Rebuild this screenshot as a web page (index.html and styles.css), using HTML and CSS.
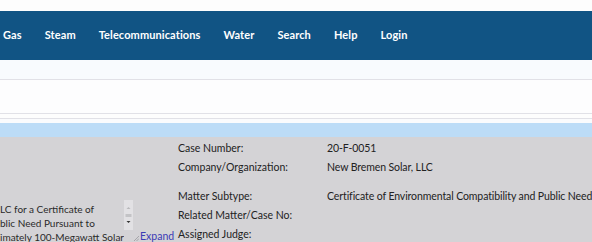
FILE: index.html
```html
<!DOCTYPE html>
<html lang="en">
<head>
    <meta charset="UTF-8">
    <meta name="viewport" content="width=device-width, initial-scale=1.0">
    <title>Case Details</title>
    <link rel="stylesheet" href="styles.css">
</head>
<body>
    <div class="top-strip"></div>

    <nav class="main-nav">
        <a href="#">Gas</a>
        <a href="#">Steam</a>
        <a href="#">Telecommunications</a>
        <a href="#">Water</a>
        <a href="#">Search</a>
        <a href="#">Help</a>
        <a href="#">Login</a>
    </nav>

    <div class="sub-bar"></div>
    <div class="search-bar"></div>
    <div class="spacer-line"></div>
    <div class="section-title"></div>

    <div class="details">
        <div class="description">
            <div class="textbox">
                <div class="textbox-text">LC for a Certificate of
blic Need Pursuant to
imately 100-Megawatt Solar</div>
                <div class="scrollbar">
                    <svg width="9" height="30" viewBox="0 0 9 30">
                        <rect x="0" y="0" width="9" height="30" fill="#e2e1e4"/>
                        <path d="M2.5 9 L4.5 7 L6.5 9 Z" fill="#b8b8bb"/>
                        <rect x="1.5" y="14" width="6" height="3" fill="#c3c3c6"/>
                        <path d="M2.5 21 L4.5 23 L6.5 21 Z" fill="#333"/>
                    </svg>
                </div>
            </div>
            <div class="expand-row">
                <svg class="grip" width="6" height="6" viewBox="0 0 6 6">
                    <path d="M1 6 L6 1 M3.5 6 L6 3.5" stroke="#9a9a9e" stroke-width="0.8"/>
                </svg>
                <a href="#" class="expand-link">Expand</a>
            </div>
        </div>

        <div class="info-grid">
            <div class="label">Case Number:</div>
            <div class="value">20-F-0051</div>
            <div class="label">Company/Organization:</div>
            <div class="value">New Bremen Solar, LLC</div>
            <div class="label gap-top">Matter Subtype:</div>
            <div class="value gap-top">Certificate of Environmental Compatibility and Public Need</div>
            <div class="label">Related Matter/Case No:</div>
            <div class="value"></div>
            <div class="label">Assigned Judge:</div>
            <div class="value"></div>
        </div>
    </div>
</body>
</html>
```

FILE: styles.css
```css
:root {
    --nav-color: #115484;
    --blue-strip: #bcdcf7;
    --panel-gray: #d4d3d6;
    --line-color: #e1e1e7;
    --text-color: #222;
}

* {
    margin: 0;
    padding: 0;
    box-sizing: border-box;
}

body {
    width: 592px;
    height: 242px;
    overflow: hidden;
    background: #fdfdfd;
    font-family: Lato, "Open Sans", sans-serif;
    color: var(--text-color);
}

.top-strip {
    height: 11px;
    background: #fdfdfd;
}

.main-nav {
    height: 49px;
    background: var(--nav-color);
    display: flex;
    align-items: center;
    gap: 23px;
    padding-left: 3px;
    padding-bottom: 2px;
}

.main-nav a {
    color: #fff;
    text-decoration: none;
    font-weight: bold;
    font-size: 11px;
    letter-spacing: 0.1px;
}

.sub-bar {
    height: 20px;
    background: #f8fbfe;
    border-bottom: 1px solid var(--line-color);
}

.search-bar {
    height: 34px;
    background: #fdfdfe;
    border-bottom: 1px solid var(--line-color);
}

.spacer-line {
    height: 5px;
    border-bottom: 1px solid var(--line-color);
}

.section-title {
    height: 18px;
    background: var(--blue-strip);
    border-top: 4px solid #fafbfd;
}

.details {
    display: flex;
    background: var(--panel-gray);
    height: 106px;
    overflow: hidden;
}

.description {
    flex-shrink: 0;
    width: 178px;
    display: flex;
    align-items: flex-end;
}

.textbox {
    display: flex;
    width: 133px;
    flex-shrink: 0;
    margin-bottom: -1px;
}

.textbox-text {
    flex: 1;
    white-space: pre;
    font-size: 10px;
    line-height: 14px;
    color: #2a2a2a;
    overflow: hidden;
}

.scrollbar {
    display: flex;
    align-items: flex-start;
    margin-top: -2px;
}

.expand-row {
    display: flex;
    align-items: flex-end;
    gap: 1px;
}

.grip {
    margin-bottom: 2px;
}

.expand-link {
    color: #3b3bb5;
    text-decoration: none;
    font-size: 10.5px;
    line-height: 14px;
}

.info-grid {
    display: grid;
    grid-template-columns: 149px 1fr;
    align-content: start;
    padding-top: 2px;
    font-size: 10.5px;
    line-height: 19px;
    white-space: nowrap;
}

.gap-top {
    margin-top: 10px;
}

.value {
    min-height: 19px;
    letter-spacing: -0.1px;
}
```
